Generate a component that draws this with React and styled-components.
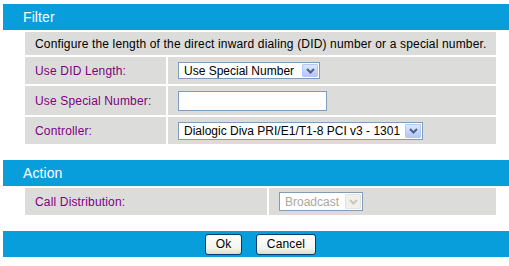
import React from 'react'
import styled, { createGlobalStyle } from 'styled-components'

const GlobalStyle = createGlobalStyle`
    body {
        margin: 0;
        background: #ffffff;
        font-family: "Liberation Sans", Arial, sans-serif;
        font-size: 12px;
        letter-spacing: 0.16px;
    }
`

const Page = styled.div`
    padding: 4px 0 0 3px;
    width: 509px;
    box-sizing: border-box;
`

const SectionHeader = styled.div`
    height: 26px;
    line-height: 26px;
    background: #079edb;
    color: #ffffff;
    font-size: 14px;
    letter-spacing: 0.1px;
    padding-left: 20px;
`

const Table = styled.div`
    display: grid;
    grid-template-columns: ${p => p.$label}px 1fr;
    gap: 2px;
    margin: 2px 13px 16px 22px;
`

const Cell = styled.div`
    background: #dcdddb;
    display: flex;
    align-items: center;
    padding-left: 10px;
    height: ${p => p.$h}px;
    color: ${p => (p.$label ? '#800080' : '#000000')};
    grid-column: ${p => (p.$wide ? '1 / span 2' : 'auto')};
    white-space: nowrap;
`

const SelectBox = styled.div`
    box-sizing: border-box;
    width: ${p => p.$w}px;
    height: ${p => p.$h}px;
    border: 1px solid #7f9db9;
    background: #ffffff;
    display: flex;
    align-items: center;
    justify-content: space-between;
    padding: 1px 1px 1px 5px;
    color: ${p => (p.$disabled ? '#aca899' : '#000000')};
    letter-spacing: 0;
    white-space: nowrap;
`

const ArrowButton = styled.div`
    box-sizing: border-box;
    width: 16px;
    height: 100%;
    border: 1px solid ${p => (p.$disabled ? '#e4e3dc' : '#b5c8f5')};
    border-radius: 1px;
    background: ${p => (p.$disabled
        ? '#f1f0ea'
        : 'linear-gradient(to bottom, #dde8fe 0%, #c2d4fb 60%, #b3c7f6 100%)')};
    display: flex;
    align-items: center;
    justify-content: center;
`

const TextInput = styled.div`
    box-sizing: border-box;
    width: 149px;
    height: 20px;
    border: 1px solid #7f9db9;
    background: #ffffff;
`

const Footer = styled.div`
    height: 26px;
    background: #079edb;
    display: flex;
    align-items: center;
    justify-content: center;
    gap: 14px;
    padding-left: 9px;
`

const Button = styled.div`
    box-sizing: border-box;
    width: ${p => p.$w}px;
    height: 21px;
    border: 1px solid #003c74;
    border-radius: 3px;
    background: linear-gradient(to bottom, #ffffff 0%, #f4f4f0 70%, #dcdad0 100%);
    display: flex;
    align-items: center;
    justify-content: center;
    color: #000000;
`

const Select = ({ w, h, disabled, children }) => (
    <SelectBox $w={w} $h={h} $disabled={disabled}>
        <span>{children}</span>
        <ArrowButton $disabled={disabled}>
            <svg width="9" height="6" viewBox="0 0 9 6">
                <polyline points="1,1 4.5,4.5 8,1" fill="none"
                    stroke={disabled ? '#c9c7ba' : '#4d6185'} strokeWidth="2" />
            </svg>
        </ArrowButton>
    </SelectBox>
)

const App = () => {
    return (
        <Page>
            <GlobalStyle />
            <SectionHeader>Filter</SectionHeader>
            <Table $label={141}>
                <Cell $wide $h={23}>Configure the length of the direct inward dialing (DID) number or a special number.</Cell>
                <Cell $label $h={27}>Use DID Length:</Cell>
                <Cell $h={27}><Select w={142} h={17}>Use Special Number</Select></Cell>
                <Cell $label $h={29}>Use Special Number:</Cell>
                <Cell $h={29}><TextInput /></Cell>
                <Cell $label $h={27}>Controller:</Cell>
                <Cell $h={27}><Select w={245} h={18}>Dialogic Diva PRI/E1/T1-8 PCI v3 - 1301</Select></Cell>
            </Table>

            <SectionHeader>Action</SectionHeader>
            <Table $label={242}>
                <Cell $label $h={27}>Call Distribution:</Cell>
                <Cell $h={27}><Select w={84} h={19} disabled>Broadcast</Select></Cell>
            </Table>

            <Footer>
                <Button $w={37}>Ok</Button>
                <Button $w={60}>Cancel</Button>
            </Footer>
        </Page>
    )
}

export default App
